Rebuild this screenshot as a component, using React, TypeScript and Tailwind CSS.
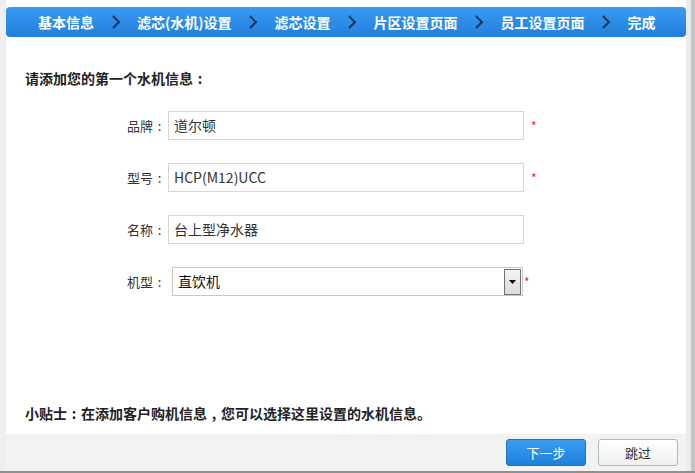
import React from 'react';

const steps = ['基本信息', '滤芯(水机)设置', '滤芯设置', '片区设置页面', '员工设置页面', '完成'];

const Chevron = () => (
  <svg width="10" height="14" viewBox="0 0 10 14" className="mx-[16.5px]">
    <path d="M2 1 L8 7 L2 13" fill="none" stroke="#0e3566" strokeWidth="2.2" />
    <path d="M3.5 1 L9 6.5" fill="none" stroke="#6aaef0" strokeWidth="0.7" opacity="0.5" />
  </svg>
);

const Colon = ({ w = 13 }: { w?: number }) => (
  <span className={`inline-block text-center ${w === 14 ? 'w-[14px]' : 'w-[13px]'}`}>:</span>
);

const Field = ({ label, value, required }: { label: string; value: string; required?: boolean }) => (
  <div className="flex items-center h-[29px]">
    <span className="w-[162px] text-right text-[13px] text-[#333] pr-[2px]">
      {label}
      <Colon />
    </span>
    <div className="w-[356px] h-[29px] border border-[#d6d6d6] bg-white flex items-center px-[5px] text-[14px] text-[#333]">
      {value}
    </div>
    {required && <span className="ml-[7px] text-[#e23] text-[12px] leading-none">*</span>}
  </div>
);

export default function App() {
  return (
    <div
      className="w-[695px] h-[473px] bg-[#efefef] flex flex-col relative overflow-hidden [text-spacing-trim:space-all]"
      style={{ fontFamily: '"Microsoft YaHei", "Noto Sans CJK SC", sans-serif' }}
    >
      <div className="flex flex-1 min-h-0">
        <div className="ml-[6px] w-[680px] flex flex-col">
          <div className="bg-white flex-1 flex flex-col">
            <div className="mt-[7px] h-[30px] rounded-[4px] bg-gradient-to-b from-[#3a9bf0] to-[#1f7fdc] flex items-center pl-[32px] text-white font-bold text-[14px]">
              {steps.map((s, i) => (
                <React.Fragment key={s}>
                  {i > 0 && <Chevron />}
                  <span>{s}</span>
                </React.Fragment>
              ))}
            </div>
            <div className="pl-[19px] mt-[31px] text-[14px] font-bold text-[#222]">
              请添加您的第一个水机信息<Colon w={14} />
            </div>
            <div className="flex flex-col gap-[23px] mt-[22px]">
              <Field label="品牌" value="道尔顿" required />
              <Field label="型号" value="HCP(M12)UCC" required />
              <Field label="名称" value="台上型净水器" />
              <div className="flex items-center h-[29px]">
                <span className="w-[162px] text-right text-[13px] text-[#333] pr-[2px]">
                  机型
                  <Colon />
                </span>
                <div className="ml-[4px] w-[351px] h-[29px] border border-[#c8c8c8] bg-white flex items-center pl-[5px] pr-[1px] text-[14px] text-[#111]">
                  <span className="flex-1">直饮机</span>
                  <div className="w-[17px] h-[26px] border border-[#707070] bg-gradient-to-b from-[#f4f4f4] to-[#dcdcdc] flex items-center justify-center">
                    <svg width="7" height="4" viewBox="0 0 7 4">
                      <path d="M0 0 L7 0 L3.5 4 Z" fill="#000" />
                    </svg>
                  </div>
                </div>
                <span className="ml-[1px] text-[#e23] text-[12px] leading-none">*</span>
              </div>
            </div>
            <div className="mt-auto mb-[10px] pl-[19px] text-[14px] font-bold text-[#222]">
              小贴士<Colon w={14} />在添加客户购机信息<span className="inline-block w-[14px] text-center">,</span>您可以选择这里设置的水机信息。
            </div>
          </div>
          <div className="h-[37px] bg-[#f2f2f2] flex items-center justify-end gap-[12px] pr-[8px]">
            <button className="w-[80px] h-[27px] rounded-[3px] bg-gradient-to-b from-[#3a9cf0] to-[#1f80dc] border border-[#1a72c8] text-white text-[13px]">
              下一步
            </button>
            <button className="w-[80px] h-[27px] rounded-[3px] bg-gradient-to-b from-white to-[#f0f0f0] border border-[#b5b5b5] text-[#333] text-[13px]">
              跳过
            </button>
          </div>
        </div>
        <div className="w-[5px] bg-[#ececec]" />
        <div className="w-[4px] bg-[#c4c4c4]" />
      </div>
      <div className="h-[2px] bg-[#8f8f8f]" />
    </div>
  );
}
